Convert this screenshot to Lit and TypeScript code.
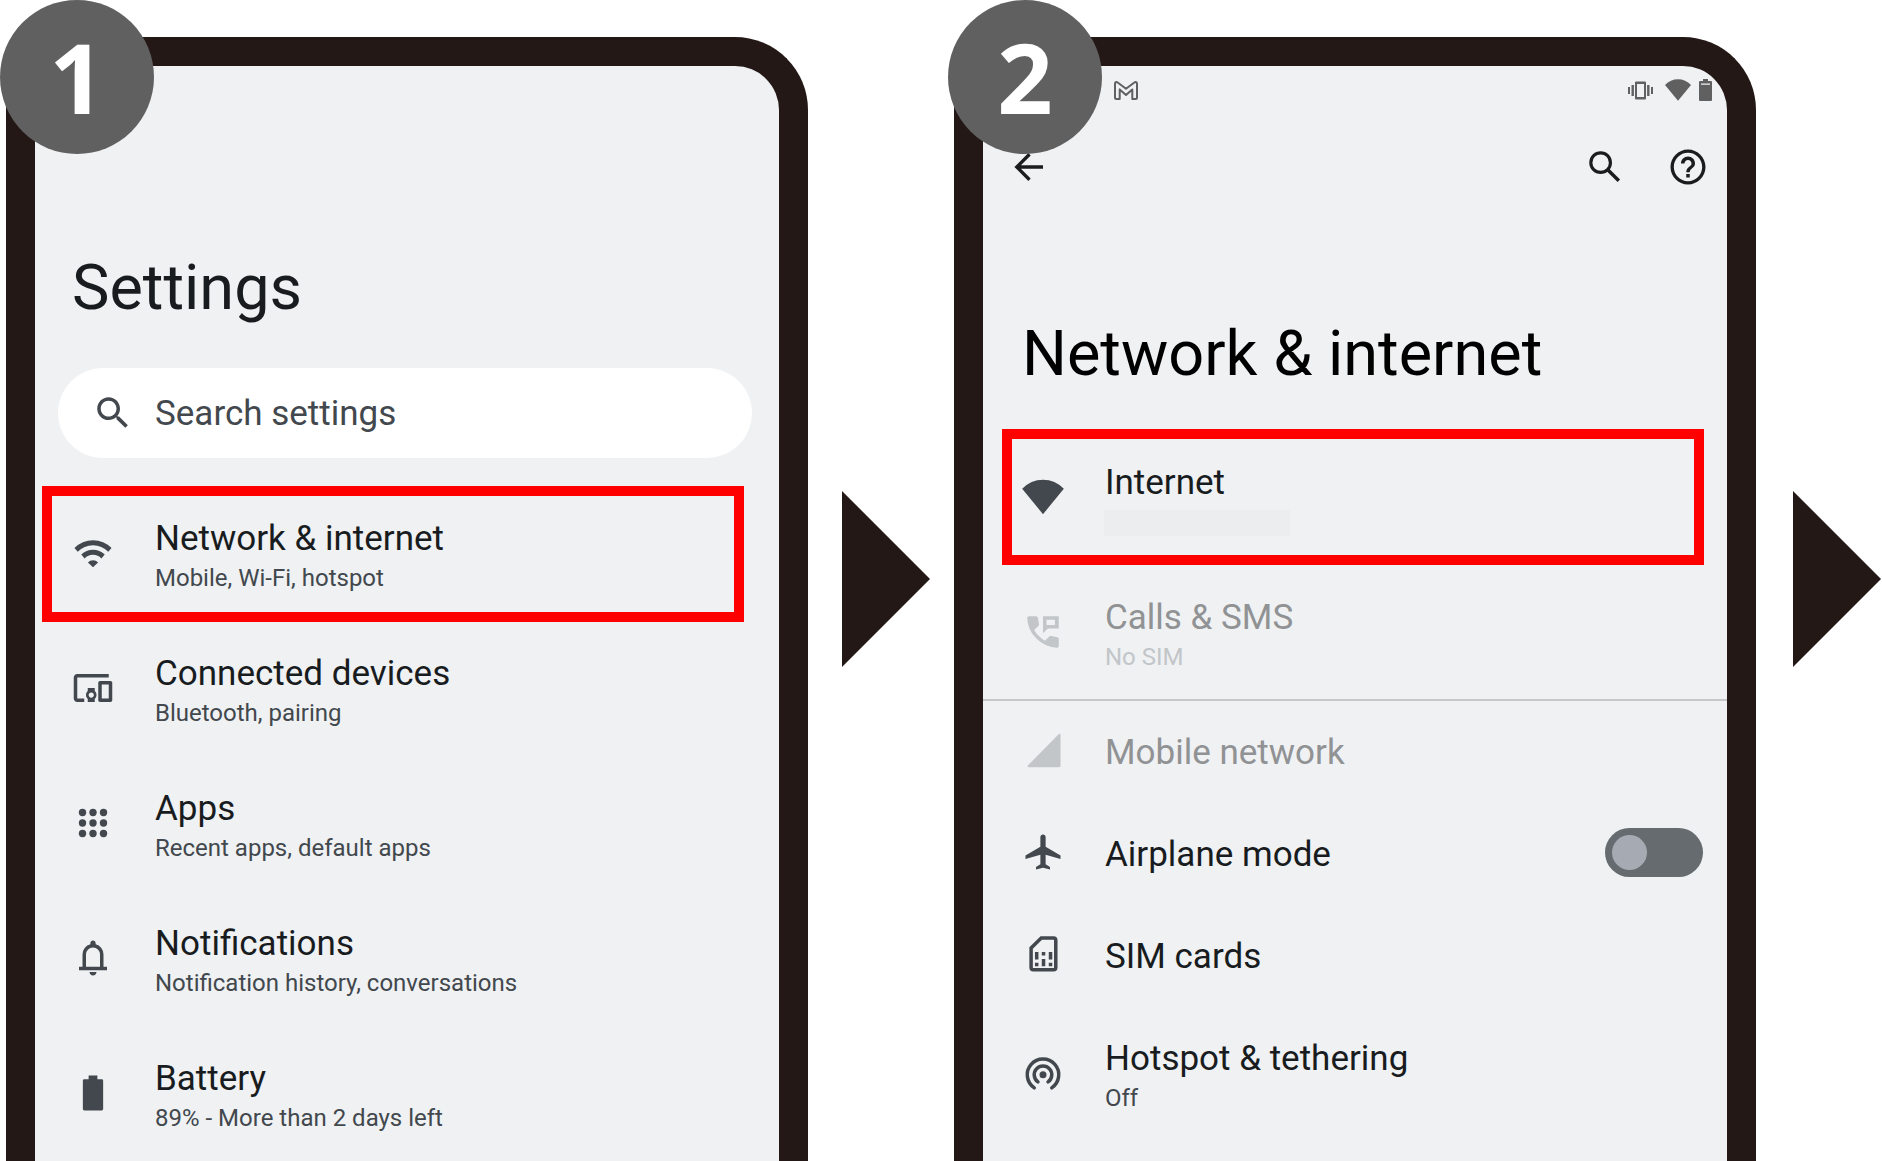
import { LitElement, html, css, svg, nothing, type TemplateResult, type SVGTemplateResult } from "lit";
import { customElement, property } from "lit/decorators.js";
import { classMap } from "lit/directives/class-map.js";

/* Icon shapes, all drawn on a 24-unit grid. */
const shapes: Record<string, SVGTemplateResult> = {
  search: svg`<path d="M15.5 14h-.79l-.28-.27C15.41 12.59 16 11.11 16 9.5 16 5.91 13.09 3 9.5 3S3 5.91 3 9.5 5.91 16 9.5 16c1.61 0 3.09-.59 4.23-1.57l.27.28v.79l5 4.99L20.49 19l-4.99-5zm-6 0C7.01 14 5 11.99 5 9.5S7.01 5 9.5 5 14 7.01 14 9.5 11.99 14 9.5 14z"/>`,
  searchThin: svg`<circle cx="9.5" cy="9.5" r="5.6" fill="none" stroke="currentColor" stroke-width="1.8"/><path d="M13.7 13.7l6.2 6.2" fill="none" stroke="currentColor" stroke-width="2"/>`,
  back: svg`<path d="M20 12H5.2M12.3 4.7L5 12l7.3 7.3" fill="none" stroke="currentColor" stroke-width="1.9"/>`,
  help: svg`<path d="M11 18h2v-2h-2v2zm1-16C6.48 2 2 6.48 2 12s4.48 10 10 10 10-4.48 10-10S17.52 2 12 2zm0 18.1c-4.46 0-8.1-3.64-8.1-8.1S7.54 3.9 12 3.9s8.1 3.64 8.1 8.1-3.64 8.1-8.1 8.1zm0-14.1c-2.21 0-4 1.79-4 4h2c0-1.1.9-2 2-2s2 .9 2 2c0 2-3 1.75-3 5h2c0-2.25 3-2.5 3-5 0-2.21-1.79-4-4-4z"/>`,
  wifi: svg`<path d="M1.4 9.2A14.8 14.8 0 0 1 22.6 9.2L20.7 11.3A12 12 0 0 0 3.3 11.3zM5.3 12.9A9.4 9.4 0 0 1 18.7 12.9L16.8 15.1A6.5 6.5 0 0 0 7.2 15.1zM9.1 17.4A3.9 3.9 0 0 1 14.9 17.4L12 20.2z"/>`,
  devices: svg`<path d="M3 6h18V4H3c-1.1 0-2 .9-2 2v12c0 1.1.9 2 2 2h4v-2H3V6zm10 6H9v1.78c-.61.55-1 1.33-1 2.22s.39 1.67 1 2.22V20h4v-1.78c.61-.55 1-1.34 1-2.22s-.39-1.67-1-2.22V12zm-2 5.5c-.83 0-1.5-.67-1.5-1.5s.67-1.5 1.5-1.5 1.5.67 1.5 1.5-.67 1.5-1.5 1.5zM22 8h-6c-.5 0-1 .5-1 1v10c0 .5.5 1 1 1h6c.5 0 1-.5 1-1V9c0-.5-.5-1-1-1zm-1 10h-4v-8h4v8z"/>`,
  apps: svg`${[6, 12, 18].map((y) => [6, 12, 18].map((x) => svg`<circle cx=${x} cy=${y} r="2.1"/>`))}`,
  bell: svg`<path d="M4 19v-2h2v-7q0-2.075 1.25-3.687T10.5 4.2v-.7q0-.625.438-1.062T12 2t1.063.438T13.5 3.5v.7q2 .5 3.25 2.113T18 10v7h2v2zm8 3q-.825 0-1.412-.587T10 20h4q0 .825-.587 1.413T12 22m-4-5h8v-7q0-1.65-1.175-2.825T12 6 9.175 7.175 8 10z"/>`,
  battery: svg`<path d="M9.5 2h5v2.2h2.5q.8 0 .8.8v16.2q0 .8-.8.8H7q-.8 0-.8-.8V5q0-.8.8-.8h2.5z"/>`,
  wifiFull: svg`<path d="M12 21.8L.1 7.3Q5 2.1 12 2.1T23.9 7.3z"/>`,
  calls: svg`<path d="M19.95 21q-3.125 0-6.175-1.362t-5.55-3.863-3.862-5.55T3 4.05q0-.45.3-.75t.75-.3H8.1q.35 0 .625.238t.325.562l.65 3.5q.05.4-.025.675T9.4 8.45L6.975 10.9q.5.925 1.187 1.787t1.513 1.663q.775.775 1.625 1.438T13.1 17l2.35-2.35q.225-.225.588-.337t.712-.063l3.45.7q.35.1.575.363T21 15.9v4.05q0 .45-.3.75t-.75.3z"/><path fill-rule="evenodd" d="M12 3h9v7h-6.200L12 12.700zM14 5v3h4.800V5z"/>`,
  signal: svg`<path d="M20.800 3.200q1.200-1 1.200.4V21q0 .8-.8.8H4q-1.400 0-.4-1.200z"/>`,
  airplane: svg`<path d="M22 16v-2l-8.500-5V3.500C13.500 2.670 12.830 2 12 2s-1.500.67-1.500 1.500V9L2 14v2l8.500-2.500V19L8 20.500V22l4-1 4 1v-1.500L13.500 19v-5.500z"/>`,
  sim: svg`<path d="M11 2.800h7q1.300 0 1.300 1.300v15.600q0 1.300-1.300 1.300H6.500q-1.300 0-1.300-1.300V8.600z" fill="none" stroke="currentColor" stroke-width="2"/><path d="M7.400 10.900h2v4.200h-2zM7.400 17h2v2h-2zM11.300 10.900h2v2h-2zM11.300 14.900h2V19h-2zM15.300 10.900h2v4.200h-2zM15.300 17h2v2h-2z"/>`,
  hotspot: svg`<circle cx="12" cy="13" r="2"/><path d="M9.100 17.080a5 5 0 1 1 5.800 0M7 20.480a9 9 0 1 1 10 0" fill="none" stroke="currentColor" stroke-width="2" stroke-linecap="round"/>`,
};

const icon = (name: string) =>
  html`<svg class="icon" viewBox="0 0 24 24" fill="currentColor" aria-hidden="true">${shapes[name]}</svg>`;

interface Setting {
  icon: string;
  title: string;
  note?: string;
  masked?: boolean;
  highlighted?: boolean;
  disabled?: boolean;
  divided?: boolean;
  toggle?: boolean;
}

const mainSettings: Setting[] = [
  { icon: "wifi", title: "Network & internet", note: "Mobile, Wi-Fi, hotspot", highlighted: true },
  { icon: "devices", title: "Connected devices", note: "Bluetooth, pairing" },
  { icon: "apps", title: "Apps", note: "Recent apps, default apps" },
  { icon: "bell", title: "Notifications", note: "Notification history, conversations" },
  { icon: "battery", title: "Battery", note: "89% - More than 2 days left" },
];

const networkSettings: Setting[] = [
  { icon: "wifiFull", title: "Internet", masked: true, highlighted: true },
  { icon: "calls", title: "Calls & SMS", note: "No SIM", disabled: true, divided: true },
  { icon: "signal", title: "Mobile network", disabled: true },
  { icon: "airplane", title: "Airplane mode", toggle: true },
  { icon: "sim", title: "SIM cards" },
  { icon: "hotspot", title: "Hotspot & tethering", note: "Off" },
];

@customElement("settings-list")
export class SettingsList extends LitElement {
  @property({ attribute: false }) items: Setting[] = [];

  static styles = css`
    :host {
      display: block;
    }
    ul {
      list-style: none;
      margin: 0;
      padding: 0;
    }
    li {
      position: relative;
    }
    .row {
      display: flex;
      align-items: center;
      gap: 41px;
      box-sizing: border-box;
      width: 100%;
      margin: 0;
      padding: 29px 24px 27px var(--row-start);
      border: 0;
      background: none;
      color: #42484d;
      font: inherit;
      text-align: left;
      cursor: pointer;
    }
    .icon {
      flex: none;
      width: 42px;
      height: 42px;
      margin-top: -6px;
    }
    .texts {
      display: grid;
      flex: 1;
      min-width: 0;
    }
    .title {
      font-size: 35px;
      line-height: 46px;
      color: #191c1e;
    }
    .note {
      font-size: 24px;
      line-height: 33px;
    }
    .mask {
      width: 186px;
      height: 26px;
      margin: 4px 0 3px -1px;
      background: #ecedee;
    }
    .disabled {
      color: #c2c6c9;
      cursor: default;
    }
    .disabled .title {
      color: #909294;
    }
    .divided::after {
      content: "";
      position: absolute;
      inset: auto 0 0;
      height: 2px;
      background: #c5c7c9;
    }
    .marker {
      position: absolute;
      inset: var(--marker-inset);
      border: 10px solid #ff0000;
      pointer-events: none;
    }
    .switch {
      appearance: none;
      flex: none;
      box-sizing: border-box;
      width: 98px;
      height: 49px;
      margin: -10px 0 -4px;
      padding: 7px;
      border-radius: 25px;
      background: #656b6e;
      cursor: pointer;
    }
    .switch::before {
      content: "";
      display: block;
      width: 35px;
      height: 35px;
      border-radius: 50%;
      background: #a6aab2;
    }
    .switch:checked::before {
      margin-left: auto;
    }
  `;

  private texts(item: Setting): TemplateResult {
    return html`<span class="texts">
      <span class="title">${item.title}</span>
      ${item.note ? html`<span class="note">${item.note}</span>` : nothing}
      ${item.masked ? html`<span class="mask"></span>` : nothing}
    </span>`;
  }

  private row(item: Setting): TemplateResult {
    if (item.toggle) {
      return html`<label class="row">
        ${icon(item.icon)}${this.texts(item)}
        <input class="switch" type="checkbox" role="switch" />
      </label>`;
    }
    return html`<button
      type="button"
      class=${classMap({ row: true, disabled: !!item.disabled })}
      ?disabled=${item.disabled}
    >
      ${icon(item.icon)}${this.texts(item)}
    </button>`;
  }

  render() {
    return html`<ul>
      ${this.items.map(
        (item) => html`<li class=${classMap({ divided: !!item.divided })}>
          ${this.row(item)}${item.highlighted ? html`<div class="marker"></div>` : nothing}
        </li>`
      )}
    </ul>`;
  }
}

@customElement("app-root")
export class AppRoot extends LitElement {
  static styles = css`
    :host {
      display: block;
      background: #ffffff;
      font-family: Roboto, "Liberation Sans", sans-serif;
      color: #191c1e;
    }
    .guide {
      display: flex;
      box-sizing: border-box;
      min-height: 100vh;
      padding: 0 1px 0 6px;
      gap: 24px;
      overflow: hidden;
    }
    /* Each basis is the arrow plus the gap before it, so both phones grow to one width. */
    .step {
      position: relative;
      display: flex;
      flex: 1 1 122px;
      gap: 34px;
      min-width: 0;
      padding-top: 37px;
    }
    .step:last-child {
      flex-basis: 125px;
      gap: 37px;
    }
    .phone {
      flex: 1;
      min-width: 0;
      box-sizing: border-box;
      border: 29px solid #231815;
      border-bottom: 0;
      border-radius: 73px 73px 0 0;
      background: #eff1f3;
    }
    .main {
      --row-start: 37px;
      --marker-inset: -1px 35px 0 7px;
      padding-top: 185px;
    }
    .network {
      --row-start: 39px;
      --marker-inset: -2px 23px 1px 19px;
    }
    .badge {
      position: absolute;
      top: 0;
      left: -6px;
      display: grid;
      place-items: center;
      box-sizing: border-box;
      width: 154px;
      height: 154px;
      padding-bottom: 2px;
      border-radius: 50%;
      background: #606060;
      color: #ffffff;
      font: 700 97px/1 "Open Sans", "Noto Sans", sans-serif;
    }
    .arrow {
      flex: none;
      width: 88px;
      height: 176px;
      margin-top: 454px;
      fill: #231815;
    }
    h1 {
      margin: 0;
      padding-left: 37px;
      font-size: 63px;
      font-weight: 400;
      line-height: 74px;
    }
    .network h1 {
      margin-top: 97px;
      margin-bottom: 40px;
      padding-left: 39px;
      color: #000000;
    }
    .search {
      display: flex;
      align-items: center;
      gap: 21px;
      height: 90px;
      margin: 43px 27px 29px 23px;
      padding: 0 34px;
      border-radius: 45px;
      background: #ffffff;
      color: #42484d;
    }
    .search input {
      flex: 1;
      min-width: 0;
      padding: 2px 0 0;
      border: 0;
      outline: 0;
      background: none;
      color: inherit;
      font: inherit;
      font-size: 35px;
      line-height: 46px;
    }
    .search input::placeholder {
      color: inherit;
      opacity: 1;
    }
    .icon {
      flex: none;
      display: block;
      width: 42px;
      height: 42px;
    }
    .status {
      display: flex;
      align-items: center;
      height: 48px;
      padding: 0 15px 0 131px;
      color: #606060;
    }
    .mail {
      width: 24px;
      height: 19px;
      margin-right: auto;
    }
    .vibrate {
      width: 25px;
      height: 19px;
      margin-right: 12px;
    }
    .strength {
      width: 26px;
      height: 22px;
      margin-right: 8px;
    }
    .charge {
      width: 13px;
      height: 22px;
    }
    .toolbar {
      display: flex;
      align-items: center;
      gap: 41px;
      height: 106px;
      padding: 0 18px 0 25px;
      color: #1b1c1e;
    }
    .toolbar button {
      padding: 0;
      border: 0;
      background: none;
      color: inherit;
      cursor: pointer;
    }
    .toolbar button:first-child {
      margin-right: auto;
    }
  `;

  private arrow() {
    return html`<svg class="arrow" viewBox="0 0 88 176" aria-hidden="true"><path d="M0 0L88 88L0 176z" /></svg>`;
  }

  private statusBar() {
    return html`<div class="status">
      <svg class="mail" viewBox="0 0 24 19" fill="none" stroke="currentColor" stroke-width="2" stroke-linejoin="round" aria-hidden="true">
        <path d="M1 3Q1 1 2.500 1Q3 1 4 1.800L12 7.800L20 1.800Q21 1 21.500 1Q23 1 23 3V16.500Q23 18 21.500 18H18.300V8.400L12 14L5.700 8.400V18H2.500Q1 18 1 16.500z" />
      </svg>
      <svg class="vibrate" viewBox="0 0 25 19" fill="currentColor" aria-hidden="true">
        <path fill-rule="evenodd" d="M8 .5h9q1 0 1 1v16q0 1-1 1H8q-1 0-1-1v-16q0-1 1-1zM9 3v13h7V3z" />
        <path d="M0 6h2v7H0zM3.500 4h2.400v11h-2.400zM19.100 4h2.400v11h-2.400zM23 6h2v7h-2z" />
      </svg>
      <svg class="strength" viewBox="0 0 26 22" fill="currentColor" aria-hidden="true">
        <path d="M13 21.800L0 6Q5.500 .3 13 .3T26 6z" />
      </svg>
      <svg class="charge" viewBox="0 0 13 22" fill="currentColor" aria-hidden="true">
        <path fill-rule="evenodd" d="M4 0h5v2h3q1 0 1 1v18q0 1-1 1H1q-1 0-1-1V3q0-1 1-1h3zM2 4.500v1.300h9V4.500z" />
      </svg>
    </div>`;
  }

  render() {
    return html`<main class="guide">
      <section class="step">
        <div class="phone main">
          <h1>Settings</h1>
          <label class="search">
            ${icon("search")}
            <input type="search" placeholder="Search settings" aria-label="Search settings" />
          </label>
          <settings-list .items=${mainSettings}></settings-list>
        </div>
        ${this.arrow()}
        <div class="badge">1</div>
      </section>
      <section class="step">
        <div class="phone network">
          ${this.statusBar()}
          <div class="toolbar">
            <button type="button" aria-label="Back">${icon("back")}</button>
            <button type="button" aria-label="Search">${icon("searchThin")}</button>
            <button type="button" aria-label="Help">${icon("help")}</button>
          </div>
          <h1>Network &amp; internet</h1>
          <settings-list .items=${networkSettings}></settings-list>
        </div>
        ${this.arrow()}
        <div class="badge">2</div>
      </section>
    </main>`;
  }
}
